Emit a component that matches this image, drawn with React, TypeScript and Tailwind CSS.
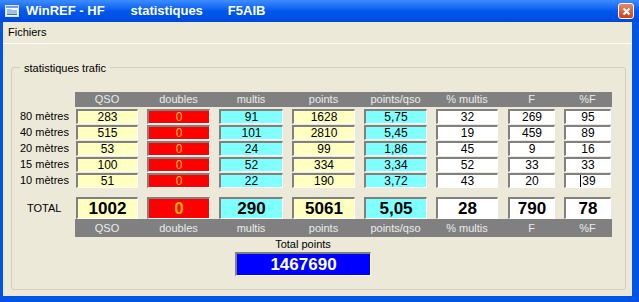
import React from "react";

const widths = ["w-[62px]", "w-[63px]", "w-[64px]", "w-[63px]", "w-[63px]", "w-[62px]", "w-[47px] ml-[1px]", "w-[47px]"];
const colors = ["bg-[#ffffc0]", "bg-[#ff0000]", "bg-[#80ffff]", "bg-[#ffffc0]", "bg-[#80ffff]", "bg-white", "bg-white", "bg-white"];
const headers = ["QSO", "doubles", "multis", "points", "points/qso", "% multis", "F", "%F"];

const rows: [string, (string | number)[]][] = [
  ["80 mètres", [283, 0, 91, 1628, "5,75", 32, 269, 95]],
  ["40 mètres", [515, 0, 101, 2810, "5,45", 19, 459, 89]],
  ["20 mètres", [53, 0, 24, 99, "1,86", 45, 9, 16]],
  ["15 mètres", [100, 0, 52, 334, "3,34", 52, 33, 33]],
  ["10 mètres", [51, 0, 22, 190, "3,72", 43, 20, 39]],
];
const total = [1002, 0, 290, 5061, "5,05", 28, 790, 78];

const Cell = ({ i, value, big, caret }: { i: number; value: string | number; big?: boolean; caret?: boolean }) => (
  <div
    className={`${widths[i]} ${colors[i]} h-full flex items-center justify-center border-t-2 border-l-2 border-t-[#808080] border-l-[#808080] border-b border-r border-b-white border-r-white ${
      i === 1 ? (big ? "text-[#ffb000]" : "text-[#ffc830]") : "text-black"
    } ${big ? "text-[17px] font-bold" : "text-[12px]"}`}
  >
    {caret && <span className="w-[1px] h-[12px] bg-black mr-[1px]" />}
    {value}
  </div>
);

const HeaderBar = ({ h }: { h: string }) => (
  <div className="flex">
    <div className="w-[63px]" />
    <div className={`w-[537px] ${h} bg-[#808080] flex pl-[1px] gap-[9px]`}>
      {headers.map((t, i) => (
        <div key={t} className={`${widths[i]} flex items-center justify-center text-[11px] text-[#ececec]`}>
          {t}
        </div>
      ))}
    </div>
  </div>
);

export default function App() {
  return (
    <div className="w-[639px] h-[302px] flex flex-col bg-[#0054e3] overflow-hidden" style={{ fontFamily: '"Liberation Sans", Arial, sans-serif' }}>
      {/* title bar */}
      <div className="h-[22px] flex items-center bg-gradient-to-b from-[#3d8dff] via-[#0058ee] to-[#0048dc] pl-[5px] pr-[5px]">
        <svg width="14" height="12" viewBox="0 0 14 12">
          <rect x="0.5" y="0.5" width="13" height="11" fill="#ffffff" stroke="#dfe8ff" />
          <rect x="1" y="1" width="12" height="2" fill="#6fa0e8" />
          <path d="M2 4h4l1 1h5v5H2z" fill="#9cc0f0" />
          <rect x="2" y="9" width="10" height="1" fill="#3a70c8" />
        </svg>
        <span className="ml-[7px] text-[13px] font-bold text-white">WinREF - HF</span>
        <span className="ml-[26px] text-[13px] font-bold text-white">statistiques</span>
        <span className="ml-[25px] text-[13px] font-bold text-white">F5AIB</span>
        <div className="ml-auto w-[16px] h-[16px] rounded-[3px] border border-white bg-gradient-to-b from-[#e8876a] to-[#c8401a] flex items-center justify-center">
          <svg width="9" height="9" viewBox="0 0 9 9">
            <path d="M1.5 1.5l6 6M7.5 1.5l-6 6" stroke="white" strokeWidth="2" />
          </svg>
        </div>
      </div>

      {/* window body */}
      <div className="flex-1 flex pl-[3px] pr-[7px] pb-[6px]">
        <div className="flex-1 flex flex-col bg-[#ece9d8]">
          <div className="h-[22px] flex items-center pl-[5px] text-[11px] text-black border-b border-white">Fichiers</div>

          <div className="relative mt-[23px] ml-[8px] mr-[6px] mb-[6px] flex-1 border border-[#d0d0bf] rounded-[3px] pt-[24px]">
            <span className="absolute -top-[8px] left-[8px] px-[4px] bg-[#ece9d8] text-[11px] text-black">statistiques trafic</span>

            <HeaderBar h="h-[15px]" />

            <div className="mt-[2px] flex flex-col gap-[1px]">
              {rows.map(([label, vals], r) => (
                <div key={label} className="flex h-[15px]">
                  <div className="w-[63px] pl-[8px] text-[11px] text-black flex items-center">{label}</div>
                  <div className="flex pl-[1px] gap-[9px]">
                    {vals.map((v, i) => (
                      <Cell key={i} i={i} value={v} caret={r === 4 && i === 7} />
                    ))}
                  </div>
                </div>
              ))}
            </div>

            <div className="mt-[9px] flex h-[22px]">
              <div className="w-[63px] pl-[15px] text-[11px] text-black flex items-center">TOTAL</div>
              <div className="flex pl-[1px] gap-[9px]">
                {total.map((v, i) => (
                  <Cell key={i} i={i} value={v} big />
                ))}
              </div>
            </div>
            <HeaderBar h="h-[18px]" />

            <div className="ml-[223px] w-[136px] flex flex-col items-center">
              <div className="h-[14px] text-[11px] text-black leading-[14px]">Total points</div>
              <div className="mt-[1px] w-full h-[24px] bg-[#0000ff] border-t-2 border-l-2 border-t-[#808080] border-l-[#808080] border-b border-r border-b-white border-r-white flex items-center justify-center text-[17px] font-bold text-white">
                1467690
              </div>
            </div>
          </div>
        </div>
      </div>
    </div>
  );
}
